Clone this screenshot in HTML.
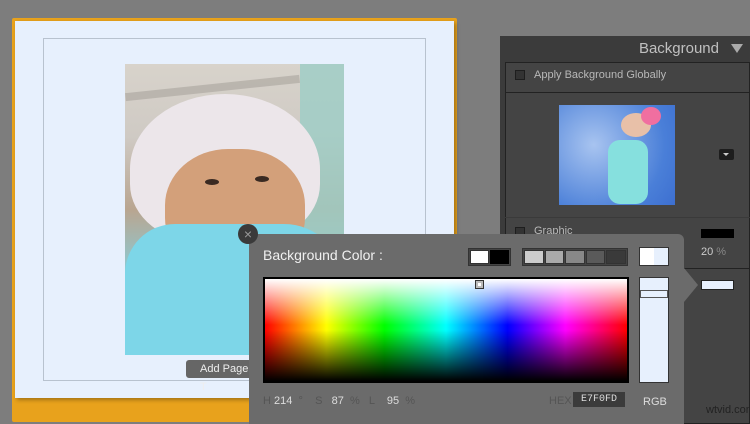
<!DOCTYPE html>
<html><head><meta charset="utf-8"><style>
*{margin:0;padding:0;box-sizing:border-box}
body{width:750px;height:424px;overflow:hidden;background:#7d7d7d;font-family:"Liberation Sans",sans-serif;position:relative}
.abs{position:absolute}
</style></head><body>
<div class="abs" style="left:12px;top:18px;width:445px;height:404px;background:#e8a21c;border-radius:2px"></div>
<div class="abs" style="left:15px;top:21px;width:439px;height:377px;background:#e7f0fd;box-shadow:2px 2px 4px rgba(0,0,0,.3)"></div>
<div class="abs" style="left:43px;top:38px;width:383px;height:343px;border:1px solid #b8c2cf"></div>
<!-- photo -->
<div class="abs" style="left:125px;top:64px;width:219px;height:291px;overflow:hidden;background:linear-gradient(180deg,#d8d3cb 0%,#cfcac4 25%,#b9a590 50%,#8fc8d0 70%,#79d4e6 100%)">
 <div class="abs" style="left:175px;top:0;width:44px;height:220px;background:#9ccdc6;opacity:.8"></div>
 <div class="abs" style="left:0;top:20px;width:175px;height:8px;background:#a8a39d;opacity:.6;transform:rotate(-6deg)"></div>
 <div class="abs" style="left:5px;top:30px;width:190px;height:150px;border-radius:50% 50% 40% 40%;background:#ece6ea"></div>
 <div class="abs" style="left:40px;top:85px;width:140px;height:125px;border-radius:45%;background:#d3a07a"></div>
 <div class="abs" style="left:80px;top:115px;width:14px;height:6px;border-radius:50%;background:#3a2a22"></div>
 <div class="abs" style="left:130px;top:112px;width:14px;height:6px;border-radius:50%;background:#3a2a22"></div>
 <div class="abs" style="left:0;top:160px;width:219px;height:131px;border-radius:50px 60px 0 0;background:#7dd6e8"></div>
</div>
<div class="abs" style="left:186px;top:360px;width:70px;height:18px;background:#666;border-radius:3px;color:#eee;font-size:11px;line-height:18px;padding-left:14px">Add Page T</div>
<!-- right panel -->
<div class="abs" style="left:500px;top:36px;width:250px;height:388px;background:#3b3b3b"></div>
<div class="abs" style="left:500px;top:36px;width:250px;height:26px;color:#c0c0c0;font-size:15px;text-align:right;padding:4px 31px 0 0">Background</div>
<div class="abs" style="left:731px;top:44px;width:0;height:0;border-left:6px solid transparent;border-right:6px solid transparent;border-top:9px solid #aaa"></div>
<div class="abs" style="left:505px;top:62px;width:245px;height:362px;background:#444;border:1px solid #222"></div>
<div class="abs" style="left:505px;top:92px;width:245px;height:1px;background:#222"></div>
<div class="abs" style="left:515px;top:70px;width:10px;height:10px;border:1px solid #1e1e1e;background:#333"></div>
<div class="abs" style="left:534px;top:69px;color:#b8b8b8;font-size:11px">Apply Background Globally</div>
<div class="abs" style="left:559px;top:105px;width:116px;height:100px;background:radial-gradient(circle at 30% 40%,#a8c4f0,#4a7fd8 70%,#3d6fd0)"></div>
<div class="abs" style="left:608px;top:140px;width:40px;height:64px;background:#86e0de;border-radius:12px"></div>
<div class="abs" style="left:621px;top:113px;width:30px;height:24px;background:#e8c0a8;border-radius:50%"></div>
<div class="abs" style="left:641px;top:107px;width:20px;height:18px;background:#f06fa0;border-radius:50%"></div>
<div class="abs" style="left:719px;top:149px;width:15px;height:11px;background:#1d1d1d;border-radius:2px"></div>
<div class="abs" style="left:723px;top:153px;width:0;height:0;border-left:3px solid transparent;border-right:3px solid transparent;border-top:3px solid #ccc"></div>
<div class="abs" style="left:505px;top:217px;width:245px;height:1px;background:#3a3a3a"></div>
<div class="abs" style="left:515px;top:227px;width:10px;height:10px;border:1px solid #1e1e1e;background:#333"></div>
<div class="abs" style="left:534px;top:225px;color:#b8b8b8;font-size:11px">Graphic</div>
<div class="abs" style="left:701px;top:229px;width:33px;height:9px;background:#000"></div>
<div class="abs" style="left:701px;top:246px;color:#ccc;font-size:11px">20 <span style="color:#888">%</span></div>
<div class="abs" style="left:684px;top:268px;width:66px;height:1px;background:#222"></div>
<div class="abs" style="left:701px;top:280px;width:33px;height:10px;background:#e7f0fd;border:1px solid #222"></div>
<!-- popup -->
<div class="abs" style="left:249px;top:234px;width:435px;height:190px;background:#6b6b6b;border-radius:0 6px 0 0"></div>
<div class="abs" style="left:684px;top:268px;width:0;height:0;border-top:17px solid transparent;border-bottom:17px solid transparent;border-left:14px solid #6b6b6b"></div>
<div class="abs" style="left:238px;top:224px;width:20px;height:20px;border-radius:50%;background:#3a3a3a;color:#999;font-size:14px;line-height:20px;text-align:center">×</div>
<div class="abs" style="left:263px;top:247px;color:#f0f0f0;font-size:14px">Background Color :</div>
<div class="abs" style="left:468px;top:248px;width:43px;height:18px;border:1px solid #333;background:#444"></div>
<div class="abs" style="left:470px;top:250px;width:19px;height:14px;background:#fff;border:1px solid #333"></div>
<div class="abs" style="left:490px;top:250px;width:19px;height:14px;background:#000"></div>
<div class="abs" style="left:522px;top:248px;width:106px;height:18px;border:1px solid #333;background:#444;padding:1px;display:flex;gap:1px">
<div style="flex:1;background:#ccc;border:1px solid #333"></div><div style="flex:1;background:#aaa;border:1px solid #333"></div><div style="flex:1;background:#888;border:1px solid #333"></div><div style="flex:1;background:#5a5a5a;border:1px solid #333"></div><div style="flex:1;background:#3a3a3a;border:1px solid #333"></div></div>
<div class="abs" style="left:639px;top:247px;width:30px;height:19px;border:1px solid #333;background:linear-gradient(90deg,#fff 50%,#e7f0fd 50%)"></div>
<div class="abs" style="left:263px;top:277px;width:366px;height:106px;border:2px solid #000;background:linear-gradient(180deg,rgba(255,255,255,1) 0%,rgba(255,255,255,0) 45%,rgba(0,0,0,0) 50%,rgba(0,0,0,1) 100%),linear-gradient(90deg,#f00,#ff0 17%,#0f0 33%,#0ff 50%,#00f 67%,#f0f 83%,#f00)"></div>
<div class="abs" style="left:475px;top:280px;width:9px;height:9px;border:1px solid #333;background:#bbb"><div style="margin:2px;width:3px;height:3px;background:#fff"></div></div>
<div class="abs" style="left:639px;top:277px;width:30px;height:106px;border:1px solid #333;background:#e7f0fd"></div>
<div class="abs" style="left:640px;top:290px;width:28px;height:8px;border:1px solid #555;background:#e7f0fd"></div>
<div class="abs" style="left:263px;top:395px;color:#555;font-size:11px;white-space:pre">H <span style="color:#ddd">214</span>  °    S   <span style="color:#ddd">87</span>  %   L    <span style="color:#ddd">95</span>  %</div>
<div class="abs" style="left:549px;top:395px;color:#555;font-size:11px">HEX</div>
<div class="abs" style="left:573px;top:392px;width:52px;height:15px;background:#3b3b3b;color:#ddd;font-family:'Liberation Mono',monospace;font-size:10px;line-height:15px;text-align:center">E7F0FD</div>
<div class="abs" style="left:643px;top:396px;color:#ddd;font-size:11px">RGB</div>
<div class="abs" style="left:706px;top:404px;color:#222;font-size:11px">wtvid.com</div>
</body></html>
